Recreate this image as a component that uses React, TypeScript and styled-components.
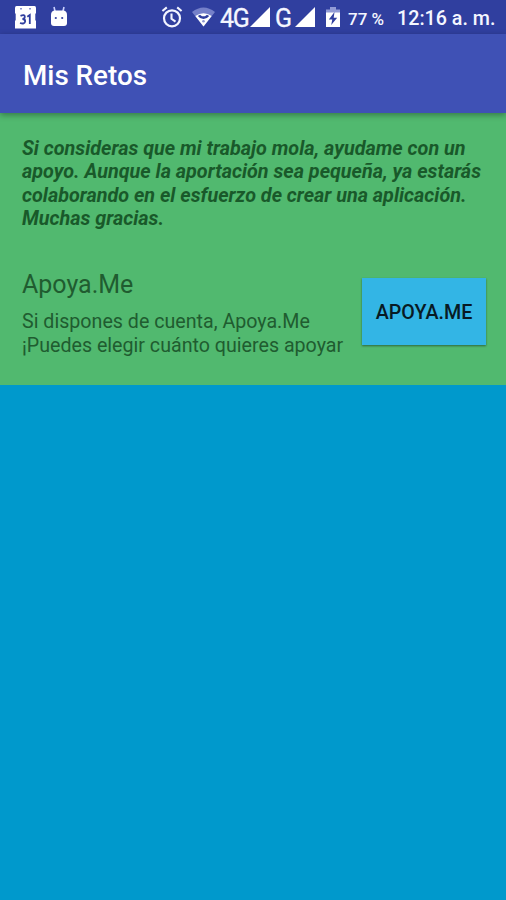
import React from "react";
import styled, { createGlobalStyle } from "styled-components";

const GlobalStyle = createGlobalStyle`
  * { box-sizing: border-box; }
  body { margin: 0; background: #0099cc; font-family: Roboto, sans-serif; }
`;

const Screen = styled.div`
  display: flex;
  flex-direction: column;
  height: 900px;
  width: 506px;
  overflow: hidden;
  background: #0099cc;
`;

const StatusBar = styled.div`
  display: flex;
  align-items: center;
  height: 34px;
  flex: none;
  background: #303f9f;
  color: #f4f6ff;
`;

const Glyph = styled.svg<{ $gap: number }>`
  display: block;
  flex: none;
  margin-left: ${(p) => p.$gap}px;
`;

const StatusText = styled.span<{ $gap: number; $size: number; $width: number; $weight?: number; $spacing?: number }>`
  flex: none;
  margin-left: ${(p) => p.$gap}px;
  width: ${(p) => p.$width}px;
  font-size: ${(p) => p.$size}px;
  font-weight: ${(p) => p.$weight ?? 400};
  letter-spacing: ${(p) => p.$spacing ?? 0}px;
  line-height: 34px;
  padding-top: 2px;
  height: 34px;
  white-space: nowrap;
`;

const NetworkText = styled(StatusText)`
  -webkit-text-stroke: 0.3px currentColor;
`;

const AppBar = styled.header`
  display: flex;
  align-items: center;
  flex: none;
  height: 79px;
  padding: 4px 0 0 23px;
  background: #3f51b5;
  box-shadow: 0 2px 6px rgba(0, 0, 0, 0.35);
  z-index: 1;
`;

const Title = styled.h1`
  margin: 0;
  color: #fff;
  font-size: 27.8px;
  font-weight: 500;
`;

const Panel = styled.main`
  flex: none;
  height: 272px;
  padding: 24px 20px 0 22px;
  background: #51b96f;
`;

const Notice = styled.p`
  margin: 0;
  color: #19592a;
  font-size: 19.8px;
  font-style: italic;
  font-weight: 700;
  line-height: 23.3px;
  white-space: nowrap;
`;

const SupportRow = styled.section`
  display: flex;
  justify-content: space-between;
  margin-top: 39.8px;
`;

const Option = styled.div`
  color: #205c30;
  white-space: nowrap;
`;

const OptionTitle = styled.h2`
  margin: 0;
  font-size: 25px;
  font-weight: 400;
  line-height: 30px;
`;

const OptionText = styled.p`
  margin: 10.4px 0 0;
  font-size: 19.65px;
  line-height: 23.3px;
`;

const SupportButton = styled.button`
  flex: none;
  width: 124px;
  height: 67px;
  margin-top: 8px;
  padding: 2px 0 0;
  border: 0;
  background: #33b5e5;
  box-shadow: 0 1px 2px rgba(0, 0, 0, 0.45);
  color: #081a24;
  font-family: inherit;
  font-size: 19.7px;
  font-weight: 500;
  white-space: nowrap;
`;

const CalendarIcon = () => (
  <Glyph $gap={14} width="23" height="24" viewBox="0 0 23 24">
    <path d="M2.5 1H20.5Q22 1 22 3V8L21.3 9V15L22 16V23.5H1V16L1.7 15V9L1 8V3Q1 1 2.5 1Z" fill="#fff" />
    <path d="M6 3.7h2M15 3.7h2" stroke="#8d95cf" strokeWidth="1.4" />
    <path d="M6.5 10.8Q10.8 9 10.8 11.8Q10.6 14 8.4 14Q11.2 14 11.2 16.4Q10.6 19.5 6 18M13.3 11.8L15.8 10V19" fill="none" stroke="#303f9f" strokeWidth="1.8" />
  </Glyph>
);

const RobotIcon = () => (
  <Glyph $gap={13} width="18" height="22" viewBox="0 0 18 22">
    <path d="M4 1L5.2 6M14 1L12.8 6" stroke="#cbd2ff" strokeWidth="1.6" />
    <path d="M1 9Q1 4.5 5 4.5H13Q17 4.5 17 9V17Q17 20 14 20H4Q1 20 1 17Z" fill="#fff" />
    <circle cx="5.8" cy="12" r="1.1" fill="#303f9f" />
    <circle cx="12.2" cy="12" r="1.1" fill="#303f9f" />
  </Glyph>
);

const AlarmIcon = () => (
  <Glyph $gap={93} width="22" height="22" viewBox="0 0 22 22" fill="none" stroke="#f2f4ff">
    <circle cx="11" cy="12.3" r="8" strokeWidth="2.2" />
    <path d="M10.5 7.5V12.8L14.5 15.6M1.4 5L5.8 1.4M16.2 1.4L20.6 5" strokeWidth="2.1" />
  </Glyph>
);

const WifiIcon = () => (
  <Glyph $gap={9} width="23" height="20" viewBox="0 0 23 20">
    <path d="M0 5Q11.5-4 23 5L11.5 19.5Z" fill="#7580c9" />
    <path d="M3.3 9Q11.5 3.4 19.7 9L11.5 19.5Z" fill="#fff" />
    <path d="M5.8 9Q8 12 11.5 12Q15 12 17.2 9L15 7.7L13 9.3H10L8 7.7Z" fill="#303f9f" />
    <circle cx="11.5" cy="14.2" r="1.3" fill="#8d95cf" />
  </Glyph>
);

const SignalIcon = ({ gap }: { gap: number }) => (
  <Glyph $gap={gap} width="20" height="20" viewBox="0 0 20 20">
    <path d="M0 20L20 0V20Z" fill="#fff" />
  </Glyph>
);

const BatteryIcon = () => (
  <Glyph $gap={11} width="14" height="20" viewBox="0 0 14 20">
    <path d="M0 2.5H4V0H10V2.5H14V6H0Z" fill="#929bd5" />
    <path d="M0 5.5H14V20H0Z" fill="#fff" />
    <path d="M8.5 5L2.8 12.5H6.3L5.2 18L11.2 10.7H7.7Z" fill="#303f9f" />
  </Glyph>
);

export default function App() {
  return (
    <>
      <GlobalStyle />
      <Screen>
        <StatusBar>
          <CalendarIcon />
          <RobotIcon />
          <AlarmIcon />
          <WifiIcon />
          <NetworkText $gap={5} $size={25} $width={28} $spacing={-1.4}>4G</NetworkText>
          <SignalIcon gap={2} />
          <NetworkText $gap={5} $size={25} $width={18}>G</NetworkText>
          <SignalIcon gap={2} />
          <BatteryIcon />
          <StatusText $gap={8} $size={17} $width={37} $weight={500}>77 %</StatusText>
          <StatusText $gap={12} $size={19.7} $width={98} $weight={500}>12:16 a. m.</StatusText>
        </StatusBar>
        <AppBar>
          <Title>Mis Retos</Title>
        </AppBar>
        <Panel>
          <Notice>
            Si consideras que mi trabajo mola, ayudame con un<br />
            apoyo. Aunque la aportación sea pequeña, ya estarás<br />
            colaborando en el esfuerzo de crear una aplicación.<br />
            Muchas gracias.
          </Notice>
          <SupportRow>
            <Option>
              <OptionTitle>Apoya.Me</OptionTitle>
              <OptionText>
                Si dispones de cuenta, Apoya.Me<br />
                ¡Puedes elegir cuánto quieres apoyar
              </OptionText>
            </Option>
            <SupportButton>APOYA.ME</SupportButton>
          </SupportRow>
        </Panel>
      </Screen>
    </>
  );
}
